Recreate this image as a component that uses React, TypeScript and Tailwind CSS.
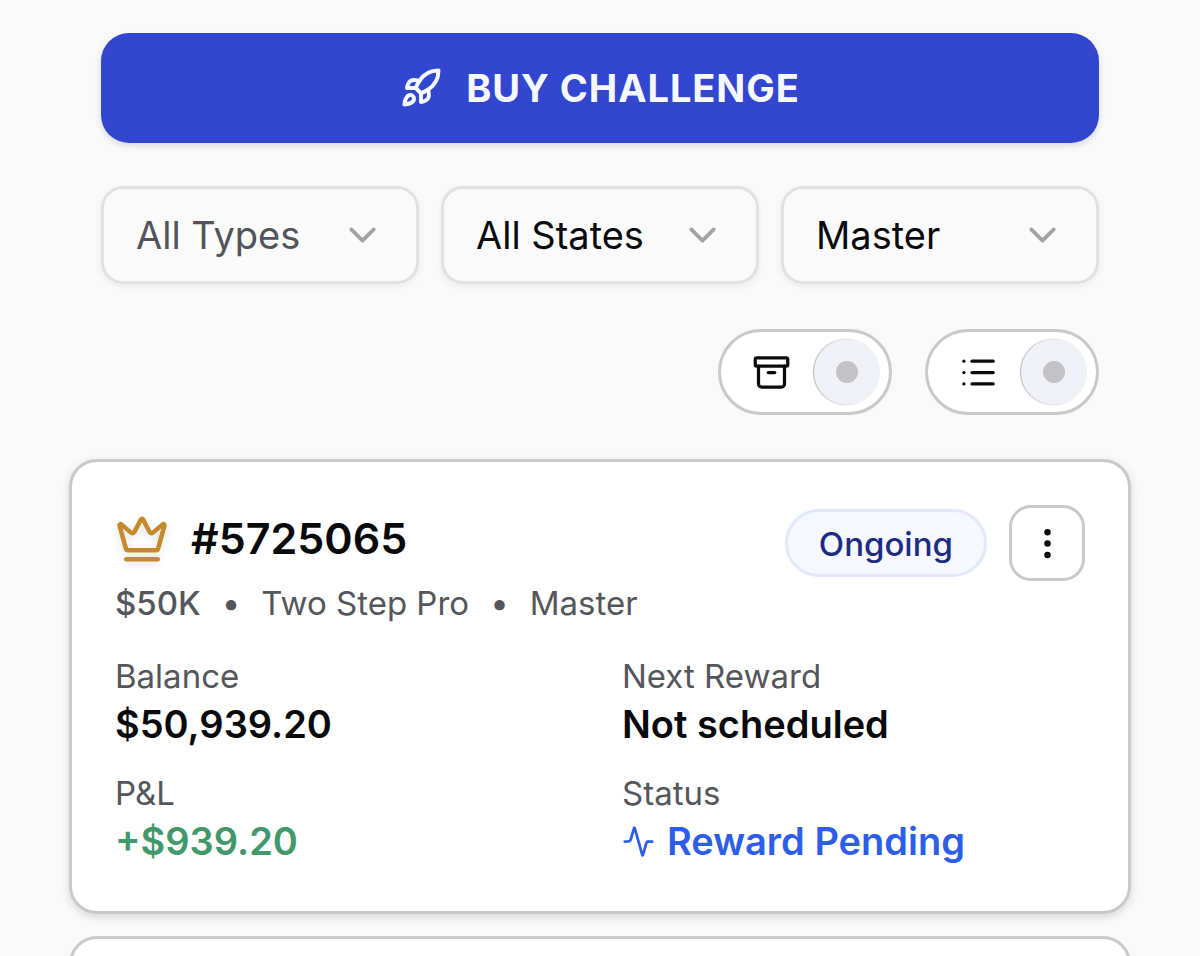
import type { ReactNode } from "react";
import {
  Activity,
  Archive,
  ChevronDown,
  Crown,
  EllipsisVertical,
  List,
  Rocket,
} from "lucide-react";

function Filter({ label, options, muted = false }: { label: string; options: string[]; muted?: boolean }) {
  return (
    <div className="relative min-w-0 flex-1">
      <select
        aria-label={label}
        className={`block h-[98px] w-full appearance-none rounded-[22px] border-[3px] border-[#e2e2e2] bg-[#fafafa] pr-20 pl-8 text-[38px] shadow-[0_3px_6px_rgba(0,0,0,0.05)] ${
          muted ? "text-[#52545a]" : "text-[#090a0c]"
        }`}
      >
        {options.map((option) => (
          <option key={option}>{option}</option>
        ))}
      </select>
      <ChevronDown
        aria-hidden="true"
        className="pointer-events-none absolute top-1/2 right-[34px] size-[45px] -translate-y-1/2 text-[#a3a3a3]"
      />
    </div>
  );
}

function Toggle({ label, children }: { label: string; children: ReactNode }) {
  return (
    <button
      type="button"
      role="switch"
      aria-checked="false"
      aria-label={label}
      className="flex h-[86px] w-[174px] items-center justify-between rounded-full border-[3px] border-[#c9c9c9] bg-white pr-[9px] pl-[31px] text-[#090a0c]"
    >
      {children}
      <span className="flex size-[66px] items-center justify-center rounded-full bg-[#f1f2f7] shadow-[-1px_0_1px_rgba(0,0,0,0.3)]">
        <span className="size-[22px] rounded-full bg-[#c3c3c6]" />
      </span>
    </button>
  );
}

function Stat({ label, tone, children }: { label: string; tone: string; children: ReactNode }) {
  return (
    <div>
      <dt className="text-[33px] leading-[45px] text-[#55565b]">{label}</dt>
      <dd className={`flex items-center gap-3 text-[38px] leading-[50px] font-semibold ${tone}`}>{children}</dd>
    </div>
  );
}

export default function App() {
  return (
    <main className="h-screen overflow-hidden bg-[#f9f9f9] px-[69px] pt-[33px] font-['Inter',sans-serif] text-[#090a0c]">
      <div className="px-8">
        <button
          type="button"
          className="flex h-[110px] w-full items-center justify-center gap-6 rounded-[28px] bg-[#3346cf] text-[38px] font-bold tracking-wide text-[#f5f8ff] shadow-[0_3px_6px_rgba(0,0,0,0.12)]"
        >
          <Rocket aria-hidden="true" strokeWidth={2.25} className="size-[42px]" />
          BUY CHALLENGE
        </button>

        <div className="mt-[43px] flex gap-[22px]">
          <Filter label="Account type" options={["All Types", "One Step", "Two Step Pro"]} muted />
          <Filter label="Account state" options={["All States", "Ongoing", "Closed"]} />
          <Filter label="Phase" options={["Master", "Student"]} />
        </div>

        <div className="mt-[45px] flex justify-end gap-[33px]">
          <Toggle label="Show archived accounts">
            <Archive aria-hidden="true" className="size-[39px]" />
          </Toggle>
          <Toggle label="List view">
            <List aria-hidden="true" className="size-[39px]" />
          </Toggle>
        </div>
      </div>

      <article className="mt-11 rounded-[28px] border-[3px] border-[#c9c9c9] bg-white px-[43px] pt-[43px] pb-[45px] shadow-[0_3px_8px_rgba(0,0,0,0.14)]">
        <header className="flex items-start justify-between">
          <div>
            <h2 className="flex items-center gap-[22px] text-[43px] leading-[67px] font-semibold">
              <Crown aria-hidden="true" className="size-[54px] text-[#c58a2b] drop-shadow-[0_3px_4px_rgba(0,0,0,0.12)]" />
              #5725065
            </h2>
            <p className="mt-[9px] flex items-center text-[33px] leading-[45px] text-[#55565b]">
              <span className="font-medium">$50K</span>
              <span className="mx-[21px]">•</span>
              <span>Two Step Pro</span>
              <span className="mx-[21px]">•</span>
              <span>Master</span>
            </p>
          </div>
          <div className="flex items-center gap-[22px]">
            <span className="flex h-[68px] items-center rounded-full border-[3px] border-[#e1e9fb] bg-[#f5f8fe] px-[31px] pt-[3px] text-[33px] font-medium text-[#1f2b80]">
              Ongoing
            </span>
            <button
              type="button"
              aria-label="Account options"
              className="flex size-[76px] items-center justify-center rounded-[22px] border-[3px] border-[#c9c9c9] bg-white"
            >
              <EllipsisVertical aria-hidden="true" className="size-[39px]" />
            </button>
          </div>
        </header>

        <dl className="mt-7 grid grid-cols-2 gap-x-11 gap-y-[22px]">
          <Stat label="Balance" tone="text-[#090a0c]">$50,939.20</Stat>
          <Stat label="Next Reward" tone="text-[#090a0c]">Not scheduled</Stat>
          <Stat label="P&L" tone="text-[#41986b]">+$939.20</Stat>
          <Stat label="Status" tone="text-[#2d5eea]">
            <Activity aria-hidden="true" className="size-[33px]" />
            Reward Pending
          </Stat>
        </dl>
      </article>

      <article
        aria-label="Next account"
        className="mt-[22px] h-60 rounded-[28px] border-[3px] border-[#c9c9c9] bg-white"
      />
    </main>
  );
}
